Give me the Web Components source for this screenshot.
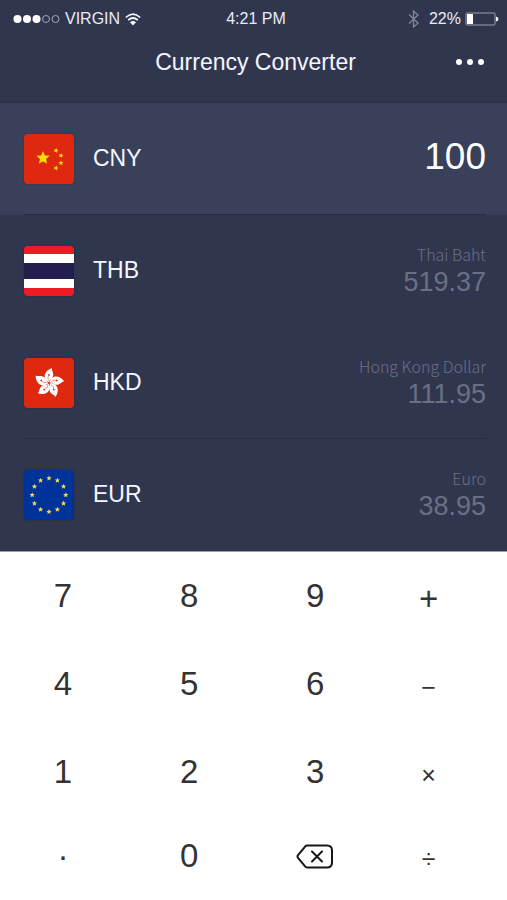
<!DOCTYPE html>
<html lang="en">
<head>
<meta charset="utf-8">
<meta name="viewport" content="width=device-width, initial-scale=1">
<title>Currency Converter</title>
<style>
  body {
    margin: 0;
    background: #fff;
    font-family: "Liberation Sans", Arial, sans-serif;
    color: #f5f7ff;
  }
</style>
</head>
<body>
<currency-app></currency-app>

<script>
class StatusBar extends HTMLElement {
  connectedCallback() {
    this.attachShadow({ mode: 'open' });
    this.shadowRoot.innerHTML = `
      <style>
        :host {
          display: grid;
          grid-template-columns: 1fr auto 1fr;
          align-items: center;
          height: 38px;
          padding: 0 8px 0 13px;
          font-size: 16px;
          color: #e9ebf5;
        }
        div { display: flex; align-items: center; gap: 5px; }
        .right { justify-content: flex-end; gap: 4px; }
        .bt { margin-right: 6px; }
        svg { display: block; }
      </style>
      <div>
        <svg width="47" height="10" viewBox="0 0 47 10" fill="#fff">
          <circle cx="4.5" cy="5" r="4"/><circle cx="14" cy="5" r="4"/><circle cx="23.5" cy="5" r="4"/>
          <g fill="none" stroke="#a3a6b5"><circle cx="33" cy="5" r="3.5"/><circle cx="42.5" cy="5" r="3.5"/></g>
        </svg>
        <span>VIRGIN</span>
        <svg width="16" height="13" viewBox="0 0 16 13" fill="none" stroke="#f5f7ff" stroke-width="1.7">
          <path d="M.8 4.500Q8-2.400 15.200 4.500M3.200 7.200Q8 2.800 12.800 7.200"/>
          <path d="M5 9.300Q8 6.800 11 9.300L8 12.600Z" fill="#f5f7ff" stroke="none"/>
        </svg>
      </div>
      <span>4:21 PM</span>
      <div class="right">
        <svg class="bt" width="11" height="18" viewBox="0 0 11 18" fill="none" stroke="#80859a" stroke-width="1.3">
          <path d="M1 4.5L10 13L5.5 17V1L10 5L1 13.5"/>
        </svg>
        <span>22%</span>
        <svg width="34" height="14" viewBox="0 0 34 14">
          <rect x="1" y="1" width="29" height="12" rx="1" fill="none" stroke="#9a9eb0"/>
          <rect x="2" y="2" width="6" height="10" fill="#fff"/>
          <path d="M31 4.5Q33.5 5 33.5 7T31 9.5Z" fill="#f5f7ff"/>
        </svg>
      </div>
    `;
  }
}
customElements.define('status-bar', StatusBar);

class TitleBar extends HTMLElement {
  connectedCallback() {
    this.attachShadow({ mode: 'open' });
    this.shadowRoot.innerHTML = `
      <style>
        :host {
          display: grid;
          grid-template-columns: 1fr auto 1fr;
          align-items: center;
          height: 48px;
          padding: 0 16px 16px 20px;
        }
        h1 {
          grid-column: 2;
          margin: 0;
          font-size: 23px;
          font-weight: 400;
        }
        button {
          justify-self: end;
          display: flex;
          padding: 8px 6px;
          border: 0;
          background: none;
          cursor: pointer;
        }
      </style>
      <h1><slot></slot></h1>
      <button type="button" aria-label="More">
        <svg width="30" height="6" viewBox="0 0 30 6" fill="#fff">
          <circle cx="4" cy="3" r="3"/><circle cx="15" cy="3" r="3"/><circle cx="26" cy="3" r="3"/>
        </svg>
      </button>
    `;
  }
}
customElements.define('title-bar', TitleBar);

// five-pointed star centred on cx, cy
function star(cx, cy, r, turn = 0) {
  const points = [];
  for (let i = 0; i < 10; i++) {
    const a = (i * 36 - 90 + turn) * Math.PI / 180;
    const d = i % 2 ? r * 0.45 : r;
    points.push((cx + d * Math.cos(a)).toFixed(2) + ',' + (cy + d * Math.sin(a)).toFixed(2));
  }
  return `<polygon points="${points.join(' ')}"/>`;
}

const petal = `
  <path d="M24.800 24.300C18.200 21.500 19.500 12.500 28 10C27.300 13.200 31 15.500 28.300 19.800C27 21.800 25.300 22 24.800 24.300Z" fill="#fff"/>
  <path d="M24.600 22.500C23.400 20.500 24 18.500 25 17" fill="none" stroke="#de2910" stroke-width=".5"/>
  <circle cx="25" cy="16.800" r=".9" fill="#de2910"/>`;

const flags = {
  CNY: `<rect width="50" height="50" fill="#de2910"/><g fill="#ffde00">
    ${star(19, 24, 7)}${star(32, 16.5, 2.6, 20)}${star(37, 21.5, 2.6, 10)}${star(37, 29, 2.6)}${star(32, 34, 2.6, 20)}</g>`,
  THB: `<rect width="50" height="50" fill="#ed1c24"/><path fill="#fff" d="M0 8h50v34H0z"/>
    <path fill="#241d4f" d="M0 17h50v16H0z"/>`,
  HKD: `<rect width="50" height="50" fill="#de2910"/>
    ${[0, 72, 144, 216, 288].map(a => `<g transform="rotate(${a} 25 25)">${petal}</g>`).join('')}`,
  EUR: `<rect width="50" height="50" fill="#039"/><g fill="#f5d64a">
    ${Array.from({ length: 12 }, (_, i) => {
      const a = i * Math.PI / 6;
      return star(25 + 16.8 * Math.sin(a), 25 - 16.8 * Math.cos(a), 2.8);
    }).join('')}</g>`
};

class CountryFlag extends HTMLElement {
  connectedCallback() {
    this.attachShadow({ mode: 'open' });
    this.shadowRoot.innerHTML = `
      <style>
        :host {
          display: block;
          width: 50px;
          height: 50px;
          border-radius: 4px;
          overflow: hidden;
          box-shadow: 0 0 2px rgba(0, 0, 0, .3);
        }
        svg { display: block; }
      </style>
      <svg width="50" height="50" viewBox="0 0 50 50" aria-hidden="true">${flags[this.getAttribute('code')]}</svg>
    `;
  }
}
customElements.define('country-flag', CountryFlag);

class CurrencyRow extends HTMLElement {
  connectedCallback() {
    const code = this.getAttribute('code');
    const editable = this.hasAttribute('editable');
    this.attachShadow({ mode: 'open' });
    this.shadowRoot.innerHTML = `
      <style>
        :host {
          display: block;
          padding: 0 21px 0 24px;
        }
        :host([editable]) { background: #394059; }
        .row {
          display: flex;
          align-items: center;
          gap: 19px;
          box-sizing: border-box;
          height: 112px;
          border-bottom: 1px solid transparent;
        }
        :host([divider]) .row { border-color: #292d43; }
        .code { font-size: 23px; }
        .value {
          flex: 1;
          min-width: 0;
          text-align: right;
          color: #6b6f84;
        }
        .name {
          font: 300 16px/22px "Noto Sans CJK SC", sans-serif;
        }
        .amount {
          font-size: 27px;
          line-height: 34px;
        }
        input {
          flex: 1;
          min-width: 0;
          padding: 0 0 4px;
          border: 0;
          outline: 0;
          background: none;
          color: #fff;
          font: 37px/44px "Liberation Sans", Arial, sans-serif;
          text-align: right;
        }
      </style>
      <div class="row">
        <country-flag code="${code}"></country-flag>
        <label class="code" for="amount">${code}</label>
        ${editable
          ? '<input id="amount" type="text" inputmode="none" value="100">'
          : '<div class="value"><div class="name"><slot></slot></div><output class="amount" id="amount"></output></div>'}
      </div>
    `;
    this.amount = this.getAttribute('amount');
  }

  get amount() {
    return this.shadowRoot.getElementById('amount').value;
  }

  set amount(value) {
    this.shadowRoot.getElementById('amount').value = value;
  }
}
customElements.define('currency-row', CurrencyRow);

class KeyPad extends HTMLElement {
  connectedCallback() {
    const keys = ['7', '8', '9', '+', '4', '5', '6', '−', '1', '2', '3', '×', '·', '0', 'del', '÷'];
    const labels = { '·': 'Decimal point', del: 'Delete' };
    const kinds = { '+': 'op plus', '−': 'op', '×': 'op', '÷': 'op' };
    const backspace = `
      <svg width="38" height="25" viewBox="0 0 38 25" fill="none" stroke="#161616" stroke-width="2" stroke-linejoin="round">
        <path d="M11 1.500H31Q36 1.500 36 6.500V18.500Q36 23.500 31 23.500H11Q10 23.500 9.300 22.700L2 13.800Q1 12.500 2 11.200L9.300 2.300Q10 1.500 11 1.500Z"/>
        <path d="M16 7.500L26 17.500M26 7.500L16 17.500" stroke-linecap="round"/>
      </svg>`;

    this.attachShadow({ mode: 'open' });
    this.shadowRoot.innerHTML = `
      <style>
        :host {
          display: grid;
          grid-template-columns: 5fr 5fr 5fr 4fr;
          grid-template-rows: repeat(3, 88px) 80px;
          padding: 0 28px 4px 0;
          background: #fff;
        }
        button {
          display: flex;
          align-items: center;
          justify-content: center;
          padding: 0;
          border: 0;
          background: none;
          color: #333;
          font: 33px/40px "Liberation Sans", Arial, sans-serif;
          cursor: pointer;
        }
        button:active { background: #f1f2f6; }
        .op { padding-top: 5px; font-size: 25px; }
        .plus { font-size: 33px; }
      </style>
      ${keys.map(key => `
        <button type="button" class="${kinds[key] || ''}" data-key="${key}" ${labels[key] ? `aria-label="${labels[key]}"` : ''}>${key === 'del' ? backspace : key}</button>
      `).join('')}
    `;

    this.shadowRoot.addEventListener('click', (e) => {
      const button = e.target.closest('button');
      if (button) {
        this.dispatchEvent(new CustomEvent('key', { detail: button.dataset.key }));
      }
    });
  }
}
customElements.define('key-pad', KeyPad);

class CurrencyApp extends HTMLElement {
  connectedCallback() {
    this.attachShadow({ mode: 'open' });
    this.shadowRoot.innerHTML = `
      <style>
        :host { display: block; }
        .screen {
          background: #31364f;
          border-bottom: 1px solid #9a9cb2;
        }
        header {
          border-bottom: 1px solid #2a2f45;
        }
      </style>
      <div class="screen">
        <header>
          <status-bar></status-bar>
          <title-bar>Currency Converter</title-bar>
        </header>
        <main>
          <currency-row code="CNY" amount="100" editable divider></currency-row>
          <currency-row code="THB" amount="519.37">Thai Baht</currency-row>
          <currency-row code="HKD" amount="111.95" divider>Hong Kong Dollar</currency-row>
          <currency-row code="EUR" amount="38.95">Euro</currency-row>
        </main>
      </div>
      <key-pad></key-pad>
    `;

    const [base, ...others] = this.shadowRoot.querySelectorAll('currency-row');
    const rates = others.map(row => row.amount / 100);

    this.shadowRoot.querySelector('key-pad').addEventListener('key', (e) => {
      const key = e.detail;
      if (key === 'del') {
        base.amount = base.amount.slice(0, -1) || '0';
      } else if (key === '·') {
        if (!base.amount.includes('.')) base.amount += '.';
      } else if (/\d/.test(key)) {
        base.amount = base.amount === '0' ? key : base.amount + key;
      }
      others.forEach((row, i) => {
        row.amount = (base.amount * rates[i]).toFixed(2);
      });
    });
  }
}
customElements.define('currency-app', CurrencyApp);
</script>
</body>
</html>
